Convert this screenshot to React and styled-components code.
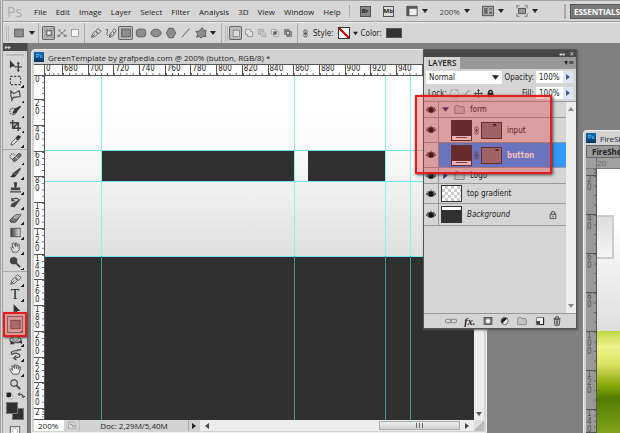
import React from "react";
import styled, { createGlobalStyle } from "styled-components";

const GlobalStyle = createGlobalStyle`
  * {
    box-sizing: border-box;
  }

  body {
    margin: 0;
    overflow: hidden;
    background: #808080;
    color: #222;
    font-family: "Open Sans", "Noto Sans", sans-serif;
    font-size: 8px;
  }

  button, input, select {
    margin: 0;
    padding: 0;
    border: 0;
    border-radius: 0;
    background: none;
    color: inherit;
    font: inherit;
  }

  svg {
    flex-shrink: 0;
  }
`;

const line = { fill: "none", stroke: "#444", strokeWidth: 1.2 };
const shape = { fill: "#8d8d8d", stroke: "#555", strokeWidth: 1 };

const glyphs = {
  move: <><path d="M1 1v9l2-2h4z" fill="#333" /><path d="M10 4.500v8M6 8.500h8M9 5.500l1-1.500 1 1.500M9 11.500l1 1.500 1-1.500" {...line} strokeWidth="1.500" /></>,
  marquee: <rect x="1.500" y="2.500" width="11" height="9" {...line} strokeDasharray="2.500 1.500" />,
  lasso: <path d="M2 2l3 3 6-3 1 6-7 1-2 3 0-3-1-1z" {...line} />,
  quick: <><circle cx="4.500" cy="8" r="3.500" {...line} strokeDasharray="1.500 1" /><path d="M4 9l2-4 6-3 1 1-5 6-3 2z" fill="#333" /></>,
  crop: <path d="M4 1v9h9M1 4h9v9M4 10l6-6" {...line} strokeWidth="1.800" />,
  dropper: <><path d="M2 12l1-3 4-4 2 2-4 4z" fill="#eee" stroke="#444" /><path d="M7 4l3-3 3 2-3 4z" fill="#333" /></>,
  heal: <><circle cx="4" cy="6" r="3" {...line} strokeDasharray="1 1" /><path d="M4 9l6-6q3-1 3 2l-6 6q-3 1-3-2z" fill="#777" stroke="#444" /><path d="M7 6l3 3" stroke="#ddd" /></>,
  brush: <><path d="M1 11q3 0 3-4l4 3q-2 4-7 1z" fill="#333" /><path d="M5 7l7-5 1 1-5 7z" fill="#444" /></>,
  stamp: <path d="M5 2q2-2 4 0l-1 5h4v3H2V7h4zM1 11h12v1.500H1z" fill="#444" />,
  history: <><path d="M2 10q-2 2 4 2l7-9-6 3-4 2z" fill="#444" /><path d="M3 4q5-3 8 0M3 2v3h3" {...line} /></>,
  eraser: <><path d="M1 10l6-6h6l-6 8H2z" fill="#777" stroke="#333" /><path d="M7 4h6l-4 4H4z" fill="#aaa" /></>,
  gradient: <><defs><linearGradient id="fade"><stop stopColor="#333" /><stop offset="1" stopColor="#eee" /></linearGradient></defs><rect x="2" y="2.500" width="10" height="9" fill="url(#fade)" stroke="#555" /></>,
  smudge: <path d="M4 12l-2-5 1-1 2 2-2-5 2-1 2 4V2h1l1 4 1-3 1 1v5l-2 3z" fill="#ddd" stroke="#555" />,
  dodge: <><circle cx="5" cy="5" r="4" fill="#444" /><path d="M7 7l5 5" stroke="#444" strokeWidth="2" /></>,
  pen: <path d="M2 12q0-5 4-7l3 3q-2 4-7 4zM2 12l4-4M7 4l2-2 4 3-3 3z" fill="#ddd" stroke="#555" />,
  freepen: <path d="M5 12q0-5 4-7l2 3q-2 4-6 4zl3-4M9 4l2-2 2 2-2 3M1 3q3-1 2 2t-1 4q1 2 2 0" fill="none" stroke="#555" />,
  arrow: <path d="M5 1v10l2-2 2 4 1.500-1-2-3.500H12z" fill="#333" />,
  rect: <rect x="2" y="2.500" width="10" height="9" {...shape} />,
  round: <rect x="1.500" y="2.500" width="11" height="9" rx="3" {...shape} />,
  ellipse: <ellipse cx="7" cy="7" rx="6" ry="4.500" {...shape} />,
  hexagon: <path d="M4.500 1.500h5L12.500 7l-3 5.500h-5L1.500 7z" {...shape} />,
  stroke: <path d="M2 12l9-10" stroke="#444" />,
  blob: <path d="M6 3l3-2 1 3 3 0-1 4 1 3-4 0-2 2-2-2-3 1 1-4-2-3 4 0z" {...shape} />,
  orbit: <><ellipse cx="7" cy="7.500" rx="6" ry="3" {...line} /><circle cx="7" cy="6" r="3" fill="#bbb" stroke="#555" /><path d="M3 8l-2 4 5 0zM10 9l4-1v4z" fill="#333" /></>,
  roll: <path d="M10 3H6Q1 4 3 7q5-3 8 0t-6 4M8 8l-3 3 3 2M9 2h4" {...line} />,
  hand: <path d="M4 12L1 7l1-1 2 2-1-5 1.500 0L6 6V2h1.500L8 6l1-4 1 .5V7l1.500-3 1 .5L11 10l-1 2z" fill="#eee" stroke="#555" />,
  zoom: <><circle cx="5.500" cy="5.500" r="3.500" {...line} /><path d="M8 8l4 4" stroke="#444" strokeWidth="2" /></>,
  reset: <><rect x="5" y="5" width="7" height="7" fill="#fff" stroke="#888" /><path d="M1 1h8v8H1z" fill="#222" /></>,
  swap: <path d="M3 4h4q4 0 4 5M5 1L2 4l3 3M8 7l3 3 3-3" {...line} stroke="#222" strokeWidth="1.600" />,
  mask: <><rect x="1.500" y="2" width="11" height="10" fill="#777" stroke="#444" /><circle cx="7" cy="7" r="3.500" fill="#fff" stroke="#777" /></>,
  quickMask: <><rect x="1.500" y="2" width="11" height="10" fill="#eee" stroke="#555" /><circle cx="7" cy="7" r="3" fill="#fff" stroke="#777" strokeDasharray="1 1" /></>,
  layerShape: <><rect x="3" y="3" width="8" height="8" fill="#999" stroke="#444" /><rect x="5" y="5" width="4" height="4" fill="#eee" /><path d="M1 1h3v3H1zM10 1h3v3h-3zM1 10h3v3H1zM10 10h3v3h-3z" fill="#eee" stroke="#555" strokeWidth=".7" /></>,
  path: <path d="M2 3l10 8M12 3L2 11M2 3h3M10 3h2M1 10h3v2H1zM10 10h3v2h-3z" {...line} stroke="#777" />,
  pixels: <rect x="2" y="2" width="10" height="10" fill="#f5f5f5" stroke="#888" />,
  combine: <rect x="3" y="3" width="9" height="9" fill="#dcdcdc" stroke="#777" />,
  add: <path d="M2 2h7v3h3v7H5V9H2z" fill="#ddd" stroke="#888" />,
  subtract: <path d="M2 9V2h7v3H5v4zM8 7h4v5H7V8" fill="#ccc" stroke="#999" />,
  intersect: <><path d="M2 2h7v7H2zM5 5h7v7H5z" fill="#ddd" stroke="#999" /><path d="M5 5h4v4H5z" fill="#555" /></>,
  exclude: <><path d="M2 2h7v7H2zM5 5h7v7H5z" fill="#888" stroke="#777" /><path d="M5 5h4v4H5z" fill="#eee" stroke="#555" /></>,
  chain: <><rect x="4.500" y="1.500" width="5" height="6" rx="2" {...line} /><rect x="4.500" y="6.500" width="5" height="6" rx="2" {...line} /><path d="M7 4v6" {...line} /></>,
  links: <><rect x="0.500" y="5" width="7" height="4" rx="2" {...line} stroke="#888" /><rect x="6.500" y="5" width="7" height="4" rx="2" {...line} stroke="#888" /></>,
  extras: <><path d="M1 1.500h12v11H1z" fill="#eee" stroke="#444" /><path d="M1 1.500h12v3H4v8H1z" fill="#555" /></>,
  arrange: <><path d="M.5 1.500h13v11H.5z" fill="#999" stroke="#444" /><path d="M2 3h5v8H2zM8 3h4v3H8zM8 7h4v4H8z" fill="#666" stroke="#ccc" strokeWidth=".7" /></>,
  screen: <><path d="M3 4h8v6H3z" fill="#999" stroke="#444" /><path d="M1 4V1h3M10 1h3v3M1 10v3h3M10 13h3v-3" {...line} stroke="#777" /></>,
  eye: <><path d="M0 7q7-8 14 0-7 7-14 0z" fill="#777" stroke="#333" /><circle cx="7" cy="7" r="3.500" fill="#111" /><path d="M2 3l2 2M7 1v2M12 3l-2 2" stroke="#333" /></>,
  folder: <path d="M1 4q0-2 2-2h2l1 1.500h6q1 0 1 1V12H1z" fill="#c4c4c4" stroke="#777" />,
  checker: <><path d="M1.500 1.500h11v11h-11z" fill="#eee" stroke="#888" /><path d="M2 2h3v3H2zM8 2h3v3H8zM5 5h3v3H5zM2 8h3v3H2zM8 8h3v3H8z" fill="#bbb" /></>,
  cross: <path d="M7 1v12M1 7h12M5 3l2-2 2 2M5 11l2 2 2-2M3 5L1 7l2 2M11 5l2 2-2 2" {...line} strokeWidth="1.500" />,
  lock: <><path d="M3 6h8v6H3z" fill="#333" stroke="#222" /><path d="M4 6q0-4 3-4t3 4" {...line} stroke="#222" strokeWidth="2" /></>,
  openLock: <><path d="M3 6h8v6H3z" fill="none" stroke="#222" /><path d="M4 6q0-4 3-4t3 4M7 8v2" {...line} stroke="#222" /></>,
  adjust: <><circle cx="6.500" cy="7" r="5" fill="#eee" stroke="#333" /><path d="M10 3.500L3 10.500A5 5 0 0 1 10 3.500z" fill="#222" /></>,
  page: <><path d="M2 2h10v10H2z" fill="#eee" stroke="#555" /><path d="M2 12V7h5v5z" fill="#444" /><path d="M12 2v10H6" fill="none" stroke="#222" strokeWidth="1.500" /></>,
  trash: <path d="M3 5h8l-1 8H4zM2 3.500h10M5 3V1h4v2M6 6v6M8 6v6" {...line} />,
  status: <><path d="M2 3h7l3 3v6H2z" fill="#ddd" stroke="#999" /><path d="M4 6q4-1 5 3M7 8l2 2 2-3" stroke="#777" fill="none" /></>,
};

const Glyph = ({ name, size = 12 }) => (
  <svg width={size} height={size} viewBox="0 0 14 14" aria-hidden="true">
    {glyphs[name]}
  </svg>
);

const Caret = ({ dir = "down", color = "#222", size = 6 }) => (
  <svg width={size} height={size} viewBox="0 0 6 6" aria-hidden="true">
    <path
      d={{ down: "M0 1h6L3 5z", right: "M1 0v6l4-3z", left: "M5 0v6L1 3z", up: "M0 5h6L3 1z" }[dir]}
      fill={color}
    />
  </svg>
);

const menus = ["File", "Edit", "Image", "Layer", "Select", "Filter", "Analysis", "3D", "View", "Window", "Help"];

const tools = [
  ["move", "marquee", "lasso", "quick", "crop", "dropper"],
  ["heal", "brush", "stamp", "history", "eraser", "gradient", "smudge", "dodge"],
  ["pen", "type", "arrow", "rect", "orbit", "roll", "hand", "zoom"],
];

const layers = [
  { name: "form", kind: "group", open: true },
  { name: "input", kind: "shape", notch: 22 },
  { name: "button", kind: "shape", notch: 27, selected: true },
  { name: "Logo", kind: "group" },
  { name: "top gradient", kind: "checker" },
  { name: "Background", kind: "page" },
];

const across = [680, 700, 720, 740, 760, 780, 800, 820, 840, 860, 880, 900, 920, 940, 960, 980];
const down = [20, 40, 60, 80, 100, 120, 140, 160, 180, 200, 220, 240];

const Digits = ({ value }) => String(value).split("").map((digit, i) => <span key={i}>{digit}</span>);

const Ruler = () => (
  <TopRuler>
    <Tick $size={18}>0</Tick>
    {across.map((n) => <Tick key={n}>{n}</Tick>)}
  </TopRuler>
);

const LayerRow = ({ layer }) => {
  const { name, kind, open, selected, notch } = layer;
  return (
    <Row $kind={kind}>
      <EyeCell aria-label={"Toggle " + name}><Glyph name="eye" size={10} /></EyeCell>
      <RowBody $kind={kind} $selected={selected}>
        {kind === "group" && <><Caret dir={open ? "down" : "right"} color="#343478" size={7} /><Glyph name="folder" size={11} /></>}
        {kind === "shape" && (
          <>
            <FillThumb><i /></FillThumb>
            <Glyph name="chain" size={9} />
            <MaskThumb>
              <svg width="18" height="14" viewBox="0 0 36 28"><path d={`M${notch} 2h6v4h-6z`} fill="#222" /></svg>
            </MaskThumb>
          </>
        )}
        {kind === "checker" && <CheckerThumb />}
        {kind === "page" && <PageThumb />}
        <LayerName $kind={kind} $selected={selected}>{name}</LayerName>
        {kind === "page" && <Glyph name="openLock" size={10} />}
      </RowBody>
    </Row>
  );
};

const LayersPanel = () => (
  <Panel>
    <PanelBar><span>◂◂</span><span>✕</span></PanelBar>
    <PanelTabs><PanelTab>LAYERS</PanelTab><button aria-label="Panel menu">▾≡</button></PanelTabs>
    <Controls>
      <SelectBox>
        <select aria-label="Blend mode" defaultValue="Normal"><option>Normal</option></select>
        <Caret size={7} />
      </SelectBox>
      <label htmlFor="opacity">Opacity:</label>
      <Percent><input id="opacity" defaultValue="100%" /><button aria-label="Opacity slider"><Caret dir="right" color="#3c5aa0" /></button></Percent>
    </Controls>
    <Controls>
      <Locks>
        <span>Lock:</span>
        {["checker", "stroke", "cross", "lock"].map((n) => <button key={n} aria-label={n}><Glyph name={n} size={9} /></button>)}
      </Locks>
      <label htmlFor="fill">Fill:</label>
      <Percent><input id="fill" defaultValue="100%" /><button aria-label="Fill slider"><Caret dir="right" color="#3c5aa0" /></button></Percent>
    </Controls>
    <ListArea>
      <List>{layers.map((layer) => <LayerRow key={layer.name} layer={layer} />)}</List>
      <ListScroll><Caret dir="up" color="#888" /><Caret color="#888" /></ListScroll>
    </ListArea>
    <PanelFooter>
      <button aria-label="Link layers"><Glyph name="links" size={12} /></button>
      <FxButton>fx.</FxButton>
      {["mask", "adjust", "folder", "page", "trash"].map((n) => <button key={n} aria-label={n}><Glyph name={n} size={10} /></button>)}
    </PanelFooter>
    <Marker />
  </Panel>
);

const App = () => (
  <Shell>
    <GlobalStyle />
    <MenuBar>
      <Logo>Ps</Logo>
      <Menu>{menus.map((m) => <button key={m}>{m}</button>)}</Menu>
      <AppBar>
        <Badge $dark>Br</Badge>
        <Badge>Mb</Badge>
        <DropButton aria-label="View extras"><Glyph name="extras" /><Caret /></DropButton>
        <DropButton>200%<Caret /></DropButton>
        <DropButton aria-label="Arrange documents"><Glyph name="arrange" /><Caret /></DropButton>
        <DropButton aria-label="Screen mode"><Glyph name="screen" /><Caret /></DropButton>
      </AppBar>
      <Essentials>ESSENTIALS</Essentials>
    </MenuBar>
    <OptionsBar>
      <Grip />
      <DropButton aria-label="Tool preset"><Glyph name="rect" /><Caret /></DropButton>
      <OptionGroup>
        {["layerShape", "path", "pixels"].map((n, i) => <OptionButton key={n} $w={13} $on={i === 0} aria-label={n}><Glyph name={n} size={10} /></OptionButton>)}
      </OptionGroup>
      <OptionGroup>
        {["pen", "freepen", "rect", "round", "ellipse", "hexagon", "stroke", "blob"].map((n) => <OptionButton key={n} $w={15} $on={n === "rect"} aria-label={n}><Glyph name={n} size={12} /></OptionButton>)}
        <OptionButton $w={10} aria-label="Shape options"><Caret /></OptionButton>
      </OptionGroup>
      <OptionGroup>
        <Grip />
        {["combine", "add", "subtract", "intersect", "exclude"].map((n, i) => <OptionButton key={n} $w={13} $on={i === 0} aria-label={n}><Glyph name={n} size={10} /></OptionButton>)}
      </OptionGroup>
      <OptionGroup>
        <Glyph name="chain" size={9} />
        <SwatchLabel>Style:<NoStyle aria-label="Style" /></SwatchLabel>
        <Caret size={5} />
        <SwatchLabel>Color:<ColorSwatch aria-label="Color" /></SwatchLabel>
      </OptionGroup>
    </OptionsBar>

    <Workspace>
      <ToolPanel>
        <ToolBar>▸▸</ToolBar>
        <ToolGrip />
        {tools.map((group, i) => (
          <ToolGroup key={i}>
            {group.map((n) => (
              <Tool key={n} $marked={n === "rect"} $plain={n === "move" || n === "zoom"} aria-label={n}>
                {n === "type" ? <TypeIcon>T</TypeIcon> : <Glyph name={n} size={13} />}
              </Tool>
            ))}
          </ToolGroup>
        ))}
        <ColorTools><Glyph name="reset" size={8} /><Glyph name="swap" size={8} /></ColorTools>
        <Swatches><b /><i /></Swatches>
        <Glyph name="quickMask" size={12} />
      </ToolPanel>

      <Desktop>
        <DocWindow>
          <DocTitle><PsIcon>Ps</PsIcon>GreenTemplate by grafpedia.com @ 200% (button, RGB/8) *</DocTitle>
          <DocBody>
            <Corner />
            <Ruler />
            <SideRuler>
              <SideTick $size={24}><Digits value="0" /></SideTick>
              {down.map((n) => <SideTick key={n}><Digits value={n} /></SideTick>)}
              <SideTick $size={11}><Digits value="2" /></SideTick>
            </SideRuler>
            <Canvas>
              <Block $x={57} $w={192} />
              <Block $x={263} $w={77} />
              {[74, 105, 180].map((y) => <GuideRow key={y} $at={y} />)}
              {[56, 249, 340, 365].map((x) => <GuideColumn key={x} $at={x} />)}
            </Canvas>
            <VScroll><Caret color="#555" /></VScroll>
          </DocBody>
          <StatusBar>
            <input aria-label="Zoom" defaultValue="200%" />
            <StatusIcon><Glyph name="status" size={10} /></StatusIcon>
            <DocInfo>Doc: 2,29M/5,40M</DocInfo>
            <StatusArrow aria-label="Status options"><Caret dir="right" /></StatusArrow>
            <HScroll><Caret dir="left" color="#444" /><Thumb><i /><i /><i /></Thumb><Caret dir="right" color="#444" /></HScroll>
            <Resize />
          </StatusBar>
        </DocWindow>

        <SideWindow>
          <DocTitle><PsIcon>Ps</PsIcon>FireShot</DocTitle>
          <SideTab>FireShot</SideTab>
          <SideBody>
            <SideCorner />
            <SideTopRuler>20</SideTopRuler>
            <GrayRuler>
              <SideTick $size={7} />
              {[20, 40, 60, 80, 100, 120].map((n) => <SideTick key={n} $size={39}><Digits value={n} /></SideTick>)}
              <SideTick><Digits value={140} /></SideTick>
            </GrayRuler>
            <Photo><PhotoTop><PhotoBox /></PhotoTop><PhotoGrass /></Photo>
          </SideBody>
        </SideWindow>

        <LayersPanel />
      </Desktop>
    </Workspace>
  </Shell>
);

export default App;

const Shell = styled.div`
  height: 100vh;
  display: flex;
  flex-direction: column;
  border-left: 3px double #a5a1a0;
  background: #d6d6d6;
`;

const MenuBar = styled.header`
  display: flex;
  align-items: center;
  height: 22px;
  flex-shrink: 0;
  border-top: 1px solid #aaa49e;
  border-bottom: 1px solid #999;
  white-space: nowrap;
  overflow: hidden;
`;

const Logo = styled.strong`
  width: 31px;
  flex-shrink: 0;
  padding-left: 4px;
  color: #aaa;
  font-size: 14px;
  font-weight: 400;
`;

const Menu = styled.nav`
  display: flex;
  gap: 9px;
  color: #222;
`;

const AppBar = styled.div`
  display: flex;
  align-items: center;
  gap: 12px;
  margin-left: 8px;
  padding-left: 10px;
  border-left: 1px solid #aaa;
`;

const Badge = styled.button`
  width: 11px;
  height: 11px;
  border: 1px solid #555;
  background: ${(props) => (props.$dark ? "#888" : "#ddd")};
  color: #222;
  font-size: 6px;
  line-height: 9px;
  font-weight: 700;
`;

const DropButton = styled.button`
  display: flex;
  align-items: center;
  gap: 4px;
  color: #444;
`;

const Essentials = styled.button`
  flex: 0 0 48px;
  height: 15px;
  margin-left: auto;
  padding-left: 3px;
  border: 1px solid #555;
  border-right: 0;
  background: #787878;
  color: #fff;
  font-size: 8px;
  font-weight: 700;
  text-align: left;
  box-shadow: -4px 0 0 #d6d6d6, -6px 0 0 #aaa;
`;

const OptionsBar = styled.div`
  display: flex;
  align-items: center;
  gap: 3px;
  height: 21px;
  flex-shrink: 0;
  padding-left: 3px;
  border-top: 1px solid #eee;
  font-family: "DejaVu Sans Condensed", sans-serif;
`;

const Grip = styled.span`
  width: 3px;
  height: 15px;
  margin-right: 1px;
  border: solid #bbb;
  border-width: 0 1px;
`;

const OptionGroup = styled.div`
  display: flex;
  align-items: center;
  height: 20px;
  padding-left: 3px;
  border-left: 1px solid #aaa;
`;

const OptionButton = styled.button`
  display: flex;
  align-items: center;
  justify-content: center;
  width: ${(props) => props.$w}px;
  height: 14px;
  border-radius: 2px;
  background: ${(props) => (props.$on ? "#bbb" : "none")};
  box-shadow: ${(props) => (props.$on ? "inset 0 0 0 1px #666" : "none")};
`;

const SwatchLabel = styled.label`
  display: flex;
  align-items: center;
  gap: 4px;
  padding: 0 3px;
`;

const NoStyle = styled.button`
  width: 12px;
  height: 12px;
  border: 1px solid #333;
  background: linear-gradient(to top right, #fff 44%, #d00 45%, #d00 55%, #fff 56%);
`;

const ColorSwatch = styled.button`
  width: 16px;
  height: 10px;
  background: #333;
  border: 1px solid #555;
`;

const Workspace = styled.main`
  display: flex;
  flex: 1;
  min-height: 0;
  background: #808080;
`;

const ToolPanel = styled.aside`
  display: flex;
  flex-direction: column;
  align-items: center;
  width: 25px;
  flex-shrink: 0;
  border-right: 1px solid #666;
  background: #d5d5d5;
`;

const ToolBar = styled.div`
  width: 100%;
  height: 8px;
  padding-left: 2px;
  background: #4a4a4a;
  color: #ddd;
  font-size: 6px;
  line-height: 8px;
`;

const ToolGrip = styled.div`
  width: 18px;
  height: 3px;
  margin: 3px 0 2px;
  border: solid #bbb;
  border-width: 1px 0;
`;

const ToolGroup = styled.div`
  display: flex;
  flex-direction: column;
  flex-shrink: 0;
  width: 100%;

  & + & {
    margin-top: 1px;
    border-top: 1px solid #aaa;
  }
`;

const Tool = styled.button`
  position: relative;
  display: flex;
  align-items: center;
  justify-content: center;
  width: 100%;
  height: 15px;

  &::before {
    content: "";
    display: ${(props) => (props.$plain ? "none" : "block")};
    position: absolute;
    right: 3px;
    bottom: 0;
    width: 3px;
    height: 3px;
    background: linear-gradient(135deg, transparent 50%, #222 50%);
  }

  &::after {
    content: "";
    display: ${(props) => (props.$marked ? "block" : "none")};
    position: absolute;
    z-index: 2;
    inset: -5px 0;
    border: 2px solid #e51c1c;
    background: rgba(225, 40, 40, 0.35);
    box-shadow: 1px 1px 2px #555, inset 0 0 0 2px #d99a9a, inset 0 0 0 3px #93595c;
  }
`;

const TypeIcon = styled.span`
  font: 14px "Liberation Serif", serif;
`;

const ColorTools = styled.div`
  display: flex;
  gap: 3px;
  height: 12px;
  align-items: center;
`;

const Swatches = styled.div`
  display: grid;
  grid-template: 6px 6px 6px / 6px 6px 6px;
  flex-shrink: 0;
  margin: 2px 0 5px;

  b, i {
    border: 1px solid #777;
    background: #2f2f2f;
  }

  b {
    grid-area: 1 / 1 / 3 / 3;
    z-index: 1;
  }

  i {
    grid-area: 2 / 2 / 4 / 4;
  }
`;

const Desktop = styled.div`
  position: relative;
  flex: 1;
  overflow: hidden;
`;

const DocWindow = styled.section`
  position: absolute;
  top: 6px;
  left: 3px;
  right: 133px;
  bottom: 0;
  display: flex;
  flex-direction: column;
  padding: 0 2px 1px;
  border: 1px solid #eee;
  border-radius: 4px 4px 0 0;
  background: #d2d2d2;
`;

const DocTitle = styled.h1`
  display: flex;
  align-items: center;
  gap: 4px;
  height: 14px;
  flex-shrink: 0;
  margin: 0;
  color: #222;
  font-size: 8px;
  font-weight: 400;
  white-space: nowrap;
`;

const PsIcon = styled.span`
  width: 10px;
  height: 10px;
  flex-shrink: 0;
  background: linear-gradient(#0a70c0, #04335f);
  color: #9cdcff;
  font-size: 6px;
  line-height: 9px;
  text-align: center;
`;

const DocBody = styled.div`
  display: grid;
  grid-template: 12px 1fr / 11px 1fr 10px;
  flex: 1;
  min-height: 0;
`;

const Corner = styled.div`
  border: solid #555;
  border-width: 1px 1px 1px 0;
  background: #fff;
`;

const TopRuler = styled.div`
  grid-column: 2 / 4;
  display: flex;
  overflow: hidden;
  padding-right: 10px;
  border-top: 1px solid #555;
  border-bottom: 1px solid #555;
  background: #fff;
  font-family: "DejaVu Sans Condensed", sans-serif;
  font-size: 8px;
  line-height: 8px;
`;

const Tick = styled.span`
  flex: ${(props) => (props.$size ? `0 0 ${props.$size}px` : "1 1 0")};
  min-width: 0;
  border-right: 1px solid #555;
  padding-left: 1px;
  background: linear-gradient(to right, #666 1px, transparent 1px) 0 100% / 25% 2px repeat-x;
`;

const SideRuler = styled.div`
  grid-column: 1;
  display: flex;
  flex-direction: column;
  border-right: 1px solid #555;
  background: #fff;
  font-family: "DejaVu Sans Condensed", sans-serif;
  font-size: 8px;
  line-height: 8px;
  overflow: hidden;
`;

const SideTick = styled.div`
  display: flex;
  flex-direction: column;
  flex: ${(props) => (props.$size ? `0 0 ${props.$size}px` : "1 1 0")};
  min-height: 0;
  overflow: hidden;
  padding-left: 1px;
  border-bottom: 1px solid #555;
  background: linear-gradient(#666 1px, transparent 1px) 100% 0 / 2px 25% repeat-y;
`;

const Canvas = styled.div`
  position: relative;
  overflow: hidden;
  background: linear-gradient(#fff 30px, #fafafa 74px, #dfdfdf 180px, #303030 180px);
`;

const Block = styled.div`
  position: absolute;
  top: 75px;
  left: ${(props) => props.$x}px;
  width: ${(props) => props.$w}px;
  height: 30px;
  background: #303030;
`;

const GuideRow = styled.div`
  position: absolute;
  top: ${(props) => props.$at}px;
  left: 0;
  right: 0;
  height: 1px;
  background: #72e6e8;
`;

const GuideColumn = styled.div`
  position: absolute;
  left: ${(props) => props.$at}px;
  top: 0;
  bottom: 0;
  width: 1px;
  background: linear-gradient(#8df0f2 180px, #3c9698 180px);
`;

const VScroll = styled.div`
  display: flex;
  align-items: flex-end;
  justify-content: center;
  padding-bottom: 3px;
  background: #ededed;
`;

const StatusBar = styled.footer`
  display: flex;
  align-items: stretch;
  height: 11px;
  flex-shrink: 0;
  line-height: 11px;

  input {
    width: 30px;
    padding-left: 4px;
    background: #fff;
  }
`;

const StatusIcon = styled.span`
  width: 16px;
  padding-left: 3px;
  border-right: 1px solid #bbb;
`;

const DocInfo = styled.span`
  width: 108px;
  text-align: center;
`;

const StatusArrow = styled.button`
  display: flex;
  align-items: center;
  width: 12px;
  padding-left: 2px;
  border-left: 1px solid #aaa;
`;

const HScroll = styled.div`
  display: flex;
  align-items: center;
  gap: 4px;
  flex: 1;
  padding: 0 4px;
  background: #ededed;
`;

const Thumb = styled.div`
  display: flex;
  align-items: center;
  justify-content: center;
  gap: 2px;
  width: 81px;
  height: 9px;
  margin-left: auto;
  border: 1px solid #aaa;
  background: linear-gradient(#eee, #cfcfd4);

  i {
    width: 1px;
    height: 5px;
    background: #666;
  }
`;

const Resize = styled.span`
  width: 10px;
  background: linear-gradient(135deg, #ddd 50%, #bbb 50%);
`;

const SideWindow = styled.section`
  position: absolute;
  top: 87px;
  right: 0;
  bottom: 0;
  display: flex;
  flex-direction: column;
  width: 37px;
  padding-left: 2px;
  border: solid #eee;
  border-width: 1px 0 0 1px;
  border-radius: 4px 0 0 0;
  background: #d2d2d2;
  overflow: hidden;
`;

const SideTab = styled.div`
  height: 13px;
  flex-shrink: 0;
  padding-left: 5px;
  border: 1px solid #666;
  background: #999;
  color: #222;
  font-size: 8px;
  font-weight: 700;
  line-height: 11px;
`;

const SideBody = styled.div`
  display: grid;
  grid-template: 11px 1fr / 11px 1fr;
  flex: 1;
  min-height: 0;
`;

const SideCorner = styled.div`
  border: solid #777;
  border-width: 0 1px 1px 0;
  background: #a0a0a0;
`;

const SideTopRuler = styled.div`
  border-bottom: 1px solid #777;
  background: #a0a0a0;
  color: #666;
  font-size: 8px;
  line-height: 9px;
`;

const GrayRuler = styled(SideRuler)`
  background: #999;
  color: #555;
`;

const Photo = styled.div`
  display: flex;
  flex-direction: column;
`;

const PhotoTop = styled.div`
  height: 162px;
  padding-top: 46px;
  background: linear-gradient(#fff 50px, #dedede);
`;

const PhotoBox = styled.div`
  width: 17px;
  height: 44px;
  border: 2px solid #ccc;
  border-left: 0;
  background: linear-gradient(#ddd, #f5f5f5);
`;

const PhotoGrass = styled.div`
  flex: 1;
  background: linear-gradient(#bdd845, #f0f18b 15%, #dde465 32%, #8aa90c 53%, #527c00 66%, #7fa21a);
`;

const Panel = styled.aside`
  position: absolute;
  top: 6px;
  right: 43px;
  width: 154px;
  border: 1px solid #555;
  background: #d5d5d5;
  box-shadow: 1px 1px 2px #555;
  font-family: "DejaVu Sans Condensed", sans-serif;
`;

const PanelBar = styled.div`
  display: flex;
  justify-content: flex-end;
  gap: 5px;
  height: 7px;
  padding-right: 2px;
  background: #484848;
  color: #ddd;
  font-size: 6px;
  line-height: 7px;
`;

const PanelTabs = styled.div`
  display: flex;
  justify-content: space-between;
  height: 12px;
  padding-right: 2px;
  background: #999;
  line-height: 12px;
`;

const PanelTab = styled.h2`
  margin: 0;
  padding: 0 4px;
  background: #d5d5d5;
  font-family: "Open Sans", sans-serif;
  font-size: 8px;
  font-weight: 600;
`;

const Controls = styled.div`
  display: flex;
  align-items: center;
  gap: 2px;
  height: 16px;
  padding: 0 3px 0 2px;
`;

const SelectBox = styled.div`
  display: flex;
  align-items: center;
  flex: 1;
  height: 13px;
  padding: 0 3px;
  background: #fff;

  select {
    flex: 1;
    appearance: none;
  }
`;

const Percent = styled.div`
  display: flex;
  align-items: center;
  width: 37px;
  height: 12px;
  background: #fff;

  input {
    width: 27px;
    padding-left: 3px;
  }

  button {
    display: flex;
    align-items: center;
    justify-content: center;
    flex: 1;
    height: 100%;
    background: #dfe5f2;
  }
`;

const Locks = styled.div`
  display: flex;
  align-items: center;
  gap: 3px;
  flex: 1;
  padding-left: 2px;

  button {
    display: flex;
  }
`;

const ListArea = styled.div`
  display: flex;
  height: 213px;
  border: solid #999;
  border-width: 1px 0;
`;

const List = styled.ul`
  flex: 1;
  margin: 0;
  padding: 0;
  list-style: none;
`;

const rowHeights = { group: 16, shape: 25, checker: 20, page: 22 };

const Row = styled.li`
  display: flex;
  height: ${(props) => rowHeights[props.$kind]}px;
  border-bottom: 1px solid #999;
`;

const EyeCell = styled.button`
  display: flex;
  align-items: center;
  justify-content: center;
  width: 15px;
  border-right: 1px solid #999;
`;

const RowBody = styled.div`
  display: flex;
  align-items: center;
  gap: ${(props) => (props.$kind === "shape" ? 0 : 5)}px;
  flex: 1;
  padding-left: ${(props) => ({ shape: 12, group: 3 }[props.$kind] || 2)}px;
  padding-right: 8px;
  background: ${(props) => (props.$selected ? "#3399ff" : "none")};
`;

const FillThumb = styled.span`
  display: flex;
  align-items: flex-end;
  width: 21px;
  height: 21px;
  border: 1px solid #333;
  background: #303030;

  i {
    flex: 1;
    height: 5px;
    border-top: 1px solid #333;
    background: linear-gradient(#555, #555) 50% 50% / 11px 1px no-repeat #eee;
  }
`;

const MaskThumb = styled.span`
  width: 21px;
  height: 17px;
  border: 1px solid #333;
  background: #808080;
  line-height: 0;
`;

const CheckerThumb = styled.span`
  width: 21px;
  height: 17px;
  border: 1px solid #333;
  background: repeating-conic-gradient(#ccc 0 25%, #fff 0 50%) 0 0 / 6px 6px;
`;

const PageThumb = styled.span`
  width: 21px;
  height: 17px;
  border: 1px solid #333;
  background: linear-gradient(#fff 3px, #303030 3px);
`;

const LayerName = styled.span`
  flex: 1;
  padding-left: ${(props) => (props.$kind === "shape" ? 5 : 0)}px;
  color: ${(props) => (props.$selected ? "#fff" : "#222")};
  font-weight: ${(props) => (props.$selected ? 700 : 400)};
  font-style: ${(props) => (props.$kind === "page" ? "italic" : "normal")};
`;

const ListScroll = styled.div`
  display: flex;
  flex-direction: column;
  align-items: center;
  justify-content: space-between;
  width: 10px;
  padding: 4px 0;
  background: #ededed;
`;

const PanelFooter = styled.footer`
  display: flex;
  align-items: center;
  justify-content: space-between;
  height: 14px;
  padding: 0 14px 0 21px;

  button {
    display: flex;
  }
`;

const FxButton = styled.button`
  font: italic 700 10px "Liberation Serif", serif;
`;

const Marker = styled.div`
  position: absolute;
  top: 45px;
  left: -9px;
  width: 137px;
  height: 79px;
  border: 2px solid #e51c1c;
  background: rgba(232, 30, 40, 0.3);
  box-shadow: 1px 1px 3px #444;
  pointer-events: none;
`;
